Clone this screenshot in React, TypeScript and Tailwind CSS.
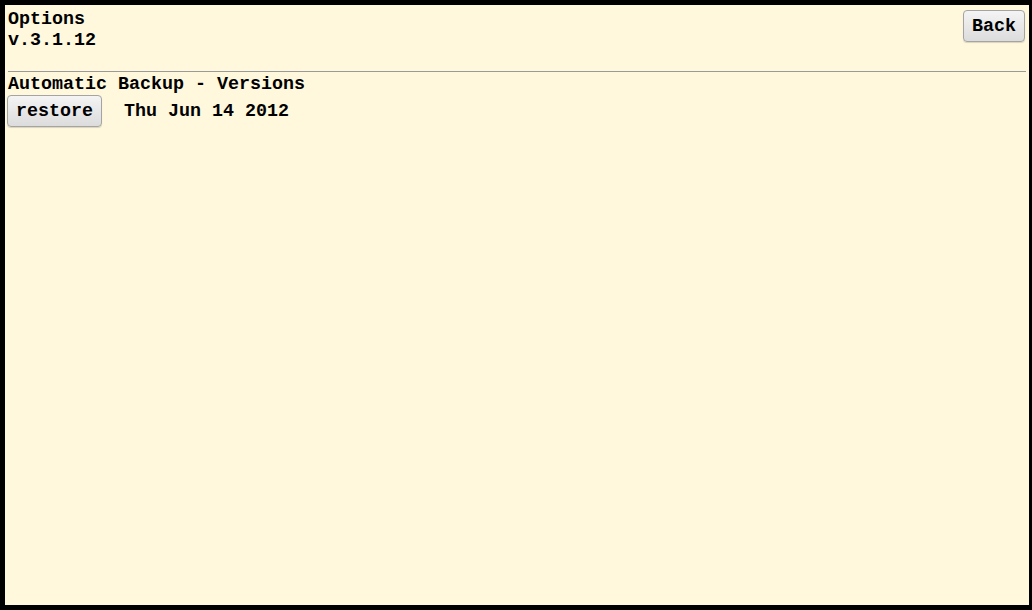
import React from 'react';

const btn =
  'rounded-[4px] border border-[#a4a4a4] bg-gradient-to-b from-[#f4f4f4] to-[#dcdcdc] shadow-[0_1px_1px_rgba(0,0,0,0.15)] text-black font-bold';

export default function App() {
  return (
    <div className="h-[610px] w-[1032px] bg-black pt-[5px] pl-[5px] pr-[3px] pb-[5px]">
      <div
        className="h-full w-full bg-[#fff8dd] px-[3px] pt-[4px] text-[18.33px] leading-[21px] font-bold text-black"
        style={{ fontFamily: '"Liberation Mono", "Courier New", monospace' }}
      >
        <div className="flex items-start justify-between">
          <div>
            <div>Options</div>
            <div>v.3.1.12</div>
          </div>
          <button className={`${btn} mr-[1px] mt-[1px] h-[32px] px-[8px]`}>Back</button>
        </div>
        <div className="mt-[20px] h-px bg-[#9a9a9a]" />
        <div className="mt-[2px]">Automatic Backup - Versions</div>
        <div className="flex items-center">
          <button className={`${btn} -ml-[1px] h-[32px] w-[95px]`}>restore</button>
          <span className="ml-[22px]">Thu Jun 14 2012</span>
        </div>
      </div>
    </div>
  );
}
